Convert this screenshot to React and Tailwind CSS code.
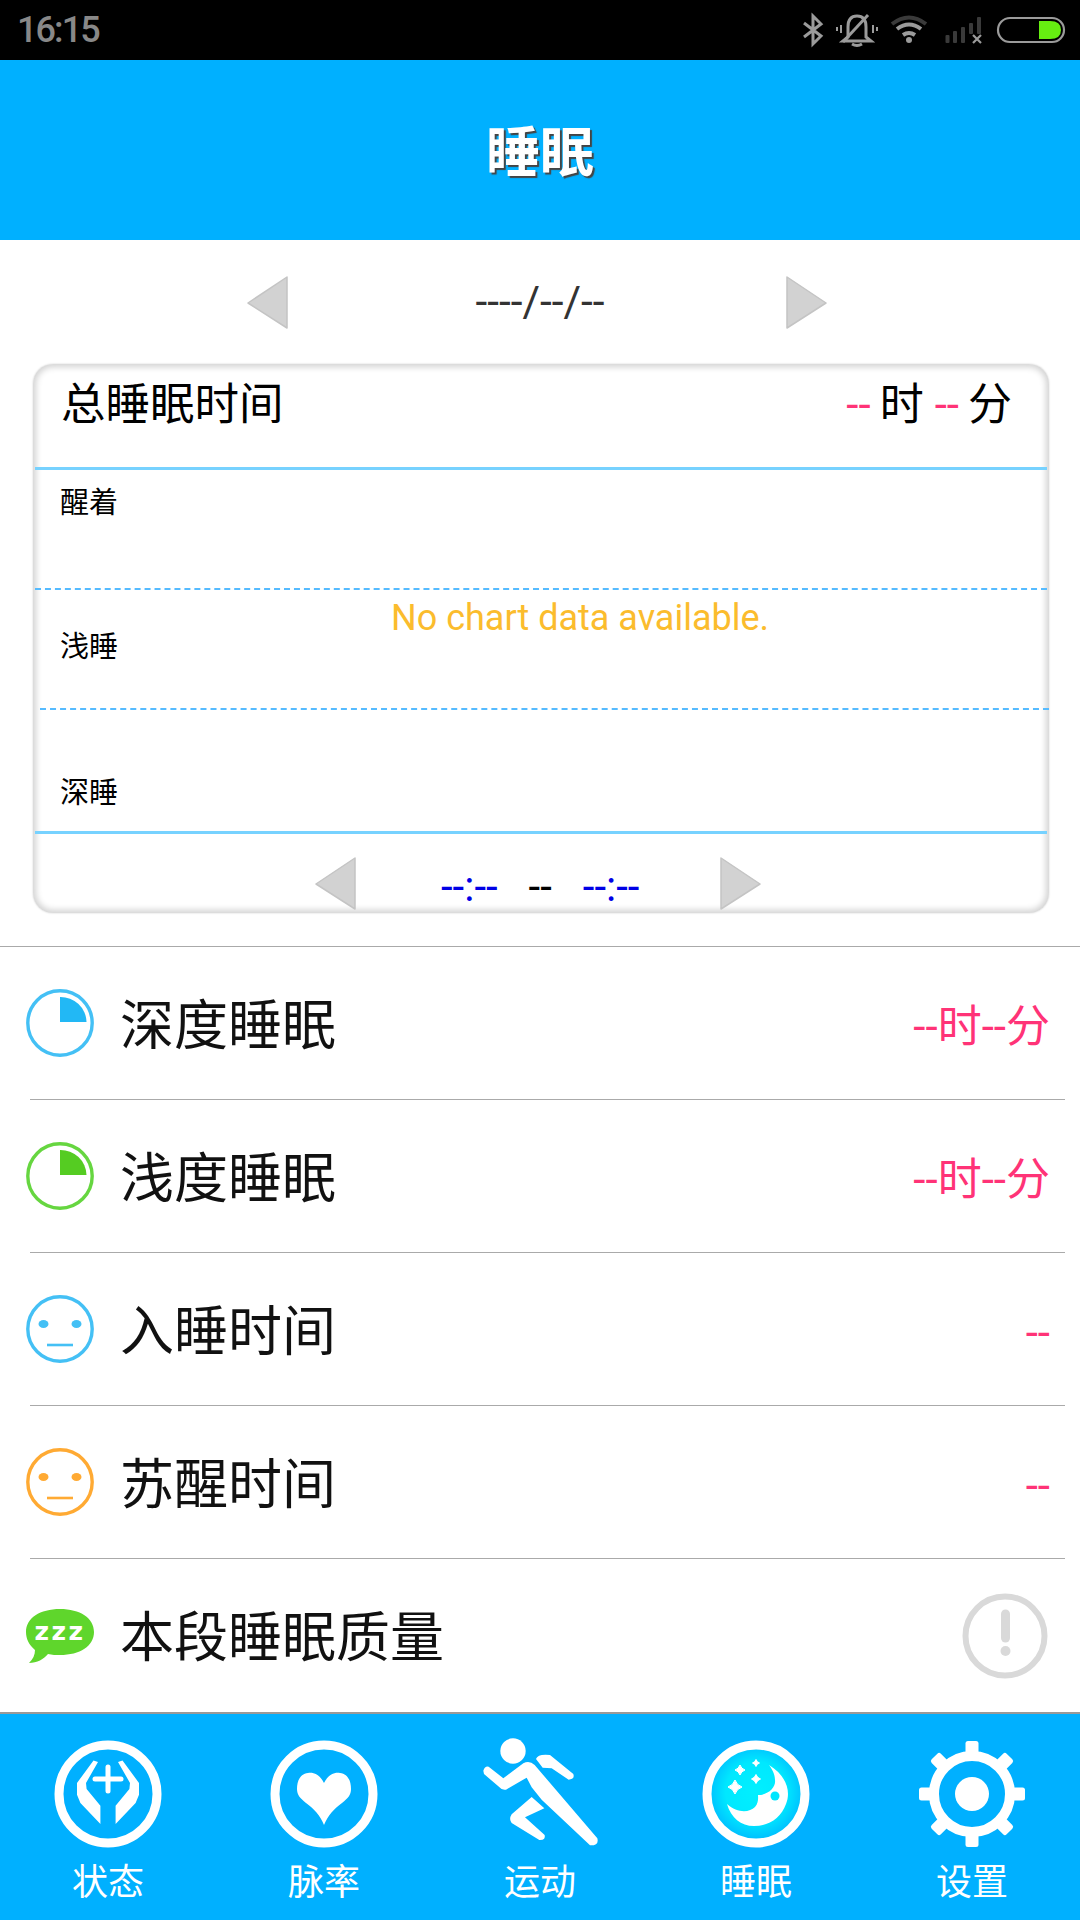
import React from "react";

const LeftArrow = ({ w = 41, h = 53 }) => (
  <svg width={w} height={h} viewBox="0 0 41 53" className="block shrink-0">
    <polygon points="40,1 40,52 1,27" fill="#d2d2d2" stroke="#c4c4c4" strokeWidth="1.5" strokeLinejoin="round" />
  </svg>
);
const RightArrow = ({ w = 41, h = 53 }) => (
  <svg width={w} height={h} viewBox="0 0 41 53" className="block shrink-0">
    <polygon points="1,1 1,52 40,27" fill="#d2d2d2" stroke="#c4c4c4" strokeWidth="1.5" strokeLinejoin="round" />
  </svg>
);

const PieIcon = ({ color, fill }) => (
  <svg width="68" height="68" viewBox="0 0 68 68" className="block shrink-0">
    <circle cx="34" cy="34" r="32.2" fill="none" stroke={color} strokeWidth="3.4" />
    <path d="M34 8 A26 25.5 0 0 1 60.5 33 L34 33 Z" fill={fill} />
  </svg>
);
const FaceIcon = ({ color }) => (
  <svg width="68" height="68" viewBox="0 0 68 68" className="block shrink-0">
    <circle cx="34" cy="34" r="32.2" fill="none" stroke={color} strokeWidth="3.4" />
    <ellipse cx="17.5" cy="29" rx="5" ry="4" fill={color} />
    <ellipse cx="50.5" cy="29" rx="5" ry="4" fill={color} />
    <line x1="21" y1="50" x2="47" y2="50" stroke={color} strokeWidth="2.6" />
  </svg>
);
const ChatIcon = () => (
  <svg width="68" height="56" viewBox="0 0 68 56" className="block shrink-0">
    <path d="M34 1 C54 1 68 10 68 24 C68 38 54 47 34 47 C30 47 26 47 22 46 C18 51 11 55 3 55 C7 51 9 47 9 42 C3 37 0 31 0 24 C0 10 14 1 34 1 Z" fill="#5fd62c" />
    <text x="34" y="32" textAnchor="middle" fill="#fff" fontFamily="DejaVu Sans" fontWeight="700" fontSize="25" letterSpacing="2.5">zzz</text>
  </svg>
);
const WarnIcon = () => (
  <svg width="86" height="86" viewBox="0 0 86 86" className="block shrink-0">
    <circle cx="43" cy="43" r="39.5" fill="none" stroke="#d9d9d9" strokeWidth="6" />
    <line x1="43.5" y1="21" x2="43.5" y2="45" stroke="#d9d9d9" strokeWidth="9" strokeLinecap="round" />
    <circle cx="43.5" cy="58" r="5" fill="#d9d9d9" />
  </svg>
);

const Ring = () => <circle cx="54" cy="54" r="49" fill="none" stroke="#fff" strokeWidth="9" />;

const NavState = () => (
  <svg width="108" height="108" viewBox="0 0 108 108" className="block shrink-0">
    <Ring />
    <polygon points="39.5,20.5 44,22 32,43 32.6,49 46.4,65.7 46.4,84 26.4,63 23,54.7 23,43" fill="#fff" />
    <polygon points="68.5,20.5 64,22 76,43 75.4,49 61.6,65.7 61.6,84 81.6,63 85,54.7 85,43" fill="#fff" />
    <line x1="41" y1="39" x2="67" y2="39" stroke="#fff" strokeWidth="5" strokeLinecap="round" />
    <line x1="54" y1="27" x2="54" y2="51" stroke="#fff" strokeWidth="5" strokeLinecap="round" />
  </svg>
);
const NavHeart = () => (
  <svg width="108" height="108" viewBox="0 0 108 108" className="block shrink-0">
    <Ring />
    <path d="M54 43 C50 35 44 32 38 33 C30 34 27 41 27 49 C27 55 30 58 36 63 C44 69 50 75 54 85 C58 75 64 69 72 63 C78 58 81 55 81 49 C81 41 78 34 70 33 C64 32 58 35 54 43Z" fill="#fff" />
  </svg>
);
const NavRun = () => (
  <svg width="140" height="130" viewBox="0 0 420 390" className="block shrink-0">
    <circle cx="129" cy="66" r="38" fill="#fff" />
    <path d="M40 125 Q45 110 56 113 L100 148 L160 103 Q178 93 194 108 L382 328 Q388 350 360 349 L215 212 L185 175 L170 146 L108 182 Q96 185 85 172 L42 135 Z" fill="#fff" />
    <path d="M198 90 Q203 74 240 78 L310 135 Q316 150 296 152 L245 118 L218 116 Z" fill="#fff" />
    <path d="M185 204 L223 238 L165 265 L224 318 Q228 334 208 333 L125 282 Q116 270 125 256 Z" fill="#fff" />
  </svg>
);
const Star = ({ x, y, s }) => (
  <path d={`M${x} ${y - s} Q${x + s * 0.25} ${y - s * 0.25} ${x + s} ${y} Q${x + s * 0.25} ${y + s * 0.25} ${x} ${y + s} Q${x - s * 0.25} ${y + s * 0.25} ${x - s} ${y} Q${x - s * 0.25} ${y - s * 0.25} ${x} ${y - s} Z`} fill="#fff" stroke="#fff" strokeWidth="1" />
);
const NavMoon = () => (
  <svg width="130" height="120" viewBox="0 0 130 120" className="block shrink-0">
    <defs>
      <radialGradient id="mg" cx="50%" cy="48%" r="50%">
        <stop offset="0%" stopColor="#00f0ff" />
        <stop offset="62%" stopColor="#00e8ff" />
        <stop offset="100%" stopColor="#00bcff" />
      </radialGradient>
    </defs>
    <g transform="translate(10 0)">
      <circle cx="55" cy="60" r="49" fill="url(#mg)" stroke="#fff" strokeWidth="9" />
      <path d="M68 31 C86 42 90 58 85 70 C80 84 68 92 53 92 C40 92 30 84 26 70 C36 79 48 79 54 73 C58 68 57 63 57 61 C68 61 75 53 74 46 C74 40 71 35 68 31 Z" fill="#fff" />
      <circle cx="74" cy="62" r="4.5" fill="#00e6ff" />
      <Star x={39} y={36} s={5} />
      <Star x={55} y={29} s={3.5} />
      <Star x={55} y={45} s={4.5} />
      <Star x={34} y={53} s={7} />
    </g>
  </svg>
);
const NavGear = () => (
  <svg width="108" height="108" viewBox="0 0 108 108" className="block shrink-0">
    <circle cx="54" cy="54" r="38" fill="none" stroke="#fff" strokeWidth="10" />
    <circle cx="54" cy="54" r="17" fill="#fff" />
    {[0, 45, 90, 135, 180, 225, 270, 315].map((a) => (
      <rect key={a} x="47.5" y="1" width="13" height="16" rx="2.5" fill="#fff" transform={`rotate(${a} 54 54)`} />
    ))}
  </svg>
);

const StatusIcons = () => (
  <svg width="320" height="60" viewBox="760 0 320 60" className="block shrink-0">
    <g fill="none" stroke="#9b9b9b">
      <path d="M804 23 L821 36 L813 44 L813 16 L821 24 L804 37" strokeWidth="3" />
      <path d="M848 37 L848 27 Q848 16 857 16 Q866 16 866 27 L866 37 L871 41 L843 41 Z M852 44 Q857 47 862 44" strokeWidth="3" />
      <line x1="843" y1="42" x2="868" y2="15" strokeWidth="3" />
      <path d="M841 25 L841 33 M837 27 L837 31 M873 25 L873 33 M877 27 L877 31" strokeWidth="2" />
      <path d="M892 24 Q909 11 926 24" stroke="#3a3a3a" strokeWidth="4" />
      <path d="M897 29 Q909 20 921 29" strokeWidth="4" />
      <path d="M903 35 Q909 31 915 35" strokeWidth="4" />
      <circle cx="909" cy="40" r="3" fill="#9b9b9b" stroke="none" />
      <rect x="945.5" y="35" width="4" height="8" fill="#3a3a3a" stroke="none" rx="1" />
      <rect x="953" y="31" width="4" height="12" fill="#3a3a3a" stroke="none" rx="1" />
      <rect x="961" y="27" width="4" height="16" fill="#3a3a3a" stroke="none" rx="1" />
      <rect x="969" y="23" width="4" height="11" fill="#3a3a3a" stroke="none" rx="1" />
      <rect x="977" y="17" width="4" height="17" fill="#3a3a3a" stroke="none" rx="1" />
      <path d="M973 35 L981 43 M981 35 L973 43" strokeWidth="2.2" />
      <rect x="998" y="18" width="66" height="24" rx="12" strokeWidth="2.2" />
      <path d="M1039 21 L1050 21 Q1061 21 1061 30 Q1061 39 1050 39 L1039 39 Z" fill="#66ee11" stroke="none" />
    </g>
  </svg>
);

const Row = ({ icon, label, right, last }) => (
  <div className={`ml-[30px] mr-[15px] h-[153px] flex items-center ${last ? "" : "border-b border-[#aaaaaa]"}`}>
    <div className="w-[68px] -ml-[4px] flex justify-center shrink-0">{icon}</div>
    <div className="ml-[26px] mt-[7px] text-[54px] leading-none text-[#111111]">{label}</div>
    <div className="ml-auto mr-[15px]">{right}</div>
  </div>
);

const Val = ({ children }) => <span className="block mt-[7px] text-[44px] leading-none text-[#ff3377]">{children}</span>;

const NavItem = ({ icon, label }) => (
  <div className="flex flex-col items-center">
    <div className="h-[111px] w-[108px] flex items-center justify-center">{icon}</div>
    <div className="mt-[14px] text-[36px] leading-[40px] text-white">{label}</div>
  </div>
);

export default function App() {
  return (
    <div className="w-[1080px] h-[1920px] flex flex-col bg-white overflow-hidden font-[Roboto,'Noto_Sans_CJK_SC',sans-serif]">
      <div className="h-[60px] bg-black flex items-center justify-between shrink-0">
        <div className="ml-[17px] text-[36px] leading-none font-medium tracking-[-1.9px] text-[#888888]">16:15</div>
        <StatusIcons />
      </div>
      <div className="h-[180px] bg-[#00b0ff] flex items-center justify-center shrink-0">
        <div className="mt-[8px] text-[54px] leading-none font-bold text-white [text-shadow:2px_2px_1px_#444]">睡眠</div>
      </div>

      <div className="h-[124px] flex items-center shrink-0">
        <div className="ml-[247px]"><LeftArrow /></div>
        <div className="ml-[187px] w-[130px] flex justify-center whitespace-nowrap text-[42.5px] leading-none text-[#333333]">----/--/--</div>
        <div className="ml-[181px]"><RightArrow /></div>
      </div>

      <div className="relative ml-[33px] mr-[31px] h-[549px] rounded-[20px] shadow-[inset_0_0_6px_3px_#d2d2d2,0_0_2px_#cccccc] flex flex-col shrink-0">
        <div className="h-[106px] border-b-[3px] border-[#77d2ff] flex pt-[16px] pl-[28px] pr-[35px] shrink-0 mx-[2px]">
          <div className="-ml-[2px] text-[44.5px] leading-[50px] text-black">总睡眠时间</div>
          <div className="ml-auto flex text-[44px] leading-[50px] text-black">
            <span className="text-[#ff3377]">--</span>
            <span className="ml-[9px]">时</span>
            <span className="ml-[11px] text-[#ff3377]">--</span>
            <span className="ml-[9px]">分</span>
          </div>
        </div>
        <div className="h-[120px] mx-[2px] border-b-2 border-dashed border-[#55bbff] pl-[25px] pt-[16px] text-[29px] leading-[34px] text-black shrink-0">醒着</div>
        <div className="h-[120px] flex items-center pb-[4px] ml-[7px] border-b-2 border-dashed border-[#55bbff] pl-[20px] text-[29px] leading-[34px] text-black shrink-0">浅睡</div>
        <div className="h-[124px] mx-[2px] border-b-[3px] border-[#77d2ff] flex items-end pl-[25px] pb-[21px] text-[29px] leading-[34px] text-black shrink-0">深睡</div>
        <div className="flex-1 flex items-center pt-[20px]">
          <div className="ml-[282px]"><LeftArrow /></div>
          <div className="ml-[85px] mt-[6px] flex text-[42px] leading-none">
            <span className="text-[#0000e6]">--:--</span>
            <span className="ml-[31px] text-black">--</span>
            <span className="ml-[31px] text-[#0000e6]">--:--</span>
          </div>
          <div className="ml-[81px]"><RightArrow /></div>
        </div>
        <div className="absolute left-[358px] top-[232px] whitespace-nowrap text-[36px] leading-[44px] text-[#fbbc2d]">No chart data available.</div>
      </div>

      <div className="mt-[33px] border-b border-[#aaaaaa] shrink-0" />

      <div className="flex-1 flex flex-col">
        <Row icon={<PieIcon color="#44c0f5" fill="#22b8f5" />} label="深度睡眠" right={<Val>--时--分</Val>} />
        <Row icon={<PieIcon color="#66d640" fill="#55cc22" />} label="浅度睡眠" right={<Val>--时--分</Val>} />
        <Row icon={<FaceIcon color="#44c0f5" />} label="入睡时间" right={<Val>--</Val>} />
        <Row icon={<FaceIcon color="#ffaa33" />} label="苏醒时间" right={<Val>--</Val>} />
        <Row icon={<ChatIcon />} label="本段睡眠质量" right={<div className="mr-[2px]"><WarnIcon /></div>} last />
      </div>

      <div className="h-[208px] border-t-2 border-[#999999] bg-[#00b0ff] grid grid-cols-5 pt-[24px] shrink-0">
        <NavItem icon={<NavState />} label="状态" />
        <NavItem icon={<NavHeart />} label="脉率" />
        <NavItem icon={<NavRun />} label="运动" />
        <NavItem icon={<NavMoon />} label="睡眠" />
        <NavItem icon={<NavGear />} label="设置" />
      </div>
    </div>
  );
}
